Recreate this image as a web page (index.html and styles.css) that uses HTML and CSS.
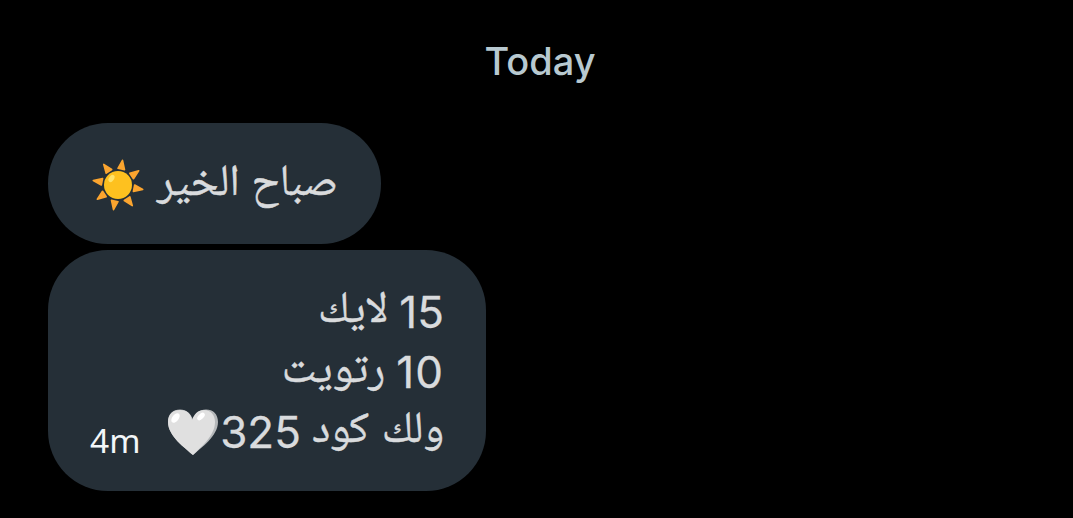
FILE: index.html
```html
<!DOCTYPE html>
<html lang="en">
  <head>
    <meta charset="UTF-8" />
    <meta name="viewport" content="width=device-width, initial-scale=1.0" />
    <title>Messages</title>
    <link rel="stylesheet" href="styles.css">
  </head>
  <body>
    <h1 class="day">Today</h1>
    <main class="messages">
      <div class="bubble bubble-short">
        <p class="line" dir="rtl">
          <span class="word word-morning">صباح الخير</span>
          <svg class="sun" viewBox="0 0 52 52" aria-hidden="true">
            <g fill="#fba52f" stroke="#fba52f" stroke-width="1.600" stroke-linejoin="round">
              <path id="ray" d="M30.500 1.300 L26 9.300 L32.500 10.600Z" />
              <use href="#ray" transform="rotate(45 26 26)" />
              <use href="#ray" transform="rotate(90 26 26)" />
              <use href="#ray" transform="rotate(135 26 26)" />
              <use href="#ray" transform="rotate(180 26 26)" />
              <use href="#ray" transform="rotate(225 26 26)" />
              <use href="#ray" transform="rotate(270 26 26)" />
              <use href="#ray" transform="rotate(315 26 26)" />
            </g>
            <circle cx="26" cy="26" r="14" fill="#fec11f" />
            <ellipse cx="19.500" cy="19.500" rx="2.400" ry="4" transform="rotate(35 19.500 19.500)" fill="#ffe36b" />
          </svg>
        </p>
      </div>
      <div class="bubble bubble-long">
        <span class="time">4m</span>
        <div class="text" dir="rtl">
          <p class="line"><span class="number">15</span><span class="word word-like">لايك</span></p>
          <p class="line"><span class="number number-wide">10</span><span class="word word-retweet">رتويت</span></p>
          <p class="line">
            <span class="word word-code">ولك كود</span><span class="number number-code">325</span>
            <svg class="heart" viewBox="0 0 52 48" aria-hidden="true">
              <path d="M26 47 C18 40 1 28 1 14 C1 6 6 1.500 13 1.500 C20 1.500 24 6 26 12 C28 6 32 1.500 39 1.500 C46 1.500 51 6 51 14 C51 28 34 40 26 47Z" fill="#b4b7b9" />
              <path d="M26 47 C18 40 1 28 1 14 C1 6 6 2 13 2 C20 2 24 6 25 12 C27 6 31 2 37 2 C44 2 48 7 48 14 C48 28 33 40 26 47Z" fill="#e0e0e0" />
              <ellipse cx="8.500" cy="10" rx="3.200" ry="5.500" transform="rotate(38 8.500 10)" fill="#fff" />
              <ellipse cx="34" cy="8.500" rx="2.600" ry="4.600" transform="rotate(45 34 8.500)" fill="#fff" />
            </svg>
          </p>
        </div>
      </div>
    </main>
  </body>
</html>
```
FILE: styles.css
```css
body {
  margin: 0;
  background-color: #000;
  color: #d9dbdd;
  font-family: Inter, "Noto Sans", sans-serif;
}

.day {
  margin: 0;
  padding: 36px 0 37px 7px;
  text-align: center;
  font-size: 38px;
  line-height: 50px;
  font-weight: 500;
  color: #b8c9d0;
}

.messages {
  display: flex;
  flex-direction: column;
  align-items: flex-start;
  gap: 6px;
  padding-left: 48px;
}

.bubble {
  box-sizing: border-box;
  display: flex;
  justify-content: space-between;
  background-color: #252f37;
  border-radius: 60px;
}

.bubble-short {
  width: 333px;
  height: 121px;
  padding: 32px 43px 29px 44px;
}

.bubble-long {
  width: 438px;
  height: 241px;
  padding: 32px 42px 29px 42px;
}

.line {
  display: flex;
  align-items: center;
  justify-content: flex-start;
  margin: 0;
  height: 60px;
  line-height: 60px;
}

.bubble-short .line {
  width: 100%;
  justify-content: space-between;
}

.word {
  padding-top: 2px;
  font-family: "Noto Naskh Arabic", "Noto Sans Arabic", "DejaVu Sans", sans-serif;
  font-size: 44px;
  line-height: 54px;
  white-space: nowrap;
  -webkit-text-stroke: 0.5px currentColor;
}

.word-morning {
  word-spacing: 2px;
}

.word-like {
  margin-right: 11px;
}

.word-retweet {
  margin-right: 11px;
}

.word-code {
  word-spacing: 3px;
}

.number {
  font-size: 44px;
  -webkit-text-stroke: 0.3px currentColor;
}

.number-wide {
  letter-spacing: 1px;
}

.number-code {
  margin-right: 11px;
}

.sun {
  width: 52px;
  height: 52px;
  flex: none;
}

.heart {
  width: 52px;
  height: 48px;
  flex: none;
  margin-right: 1px;
}

.time {
  align-self: flex-end;
  padding-bottom: 2px;
  font-family: "Noto Sans", sans-serif;
  font-size: 33.500px;
  line-height: 40px;
  color: #f2f6f8;
}
```
